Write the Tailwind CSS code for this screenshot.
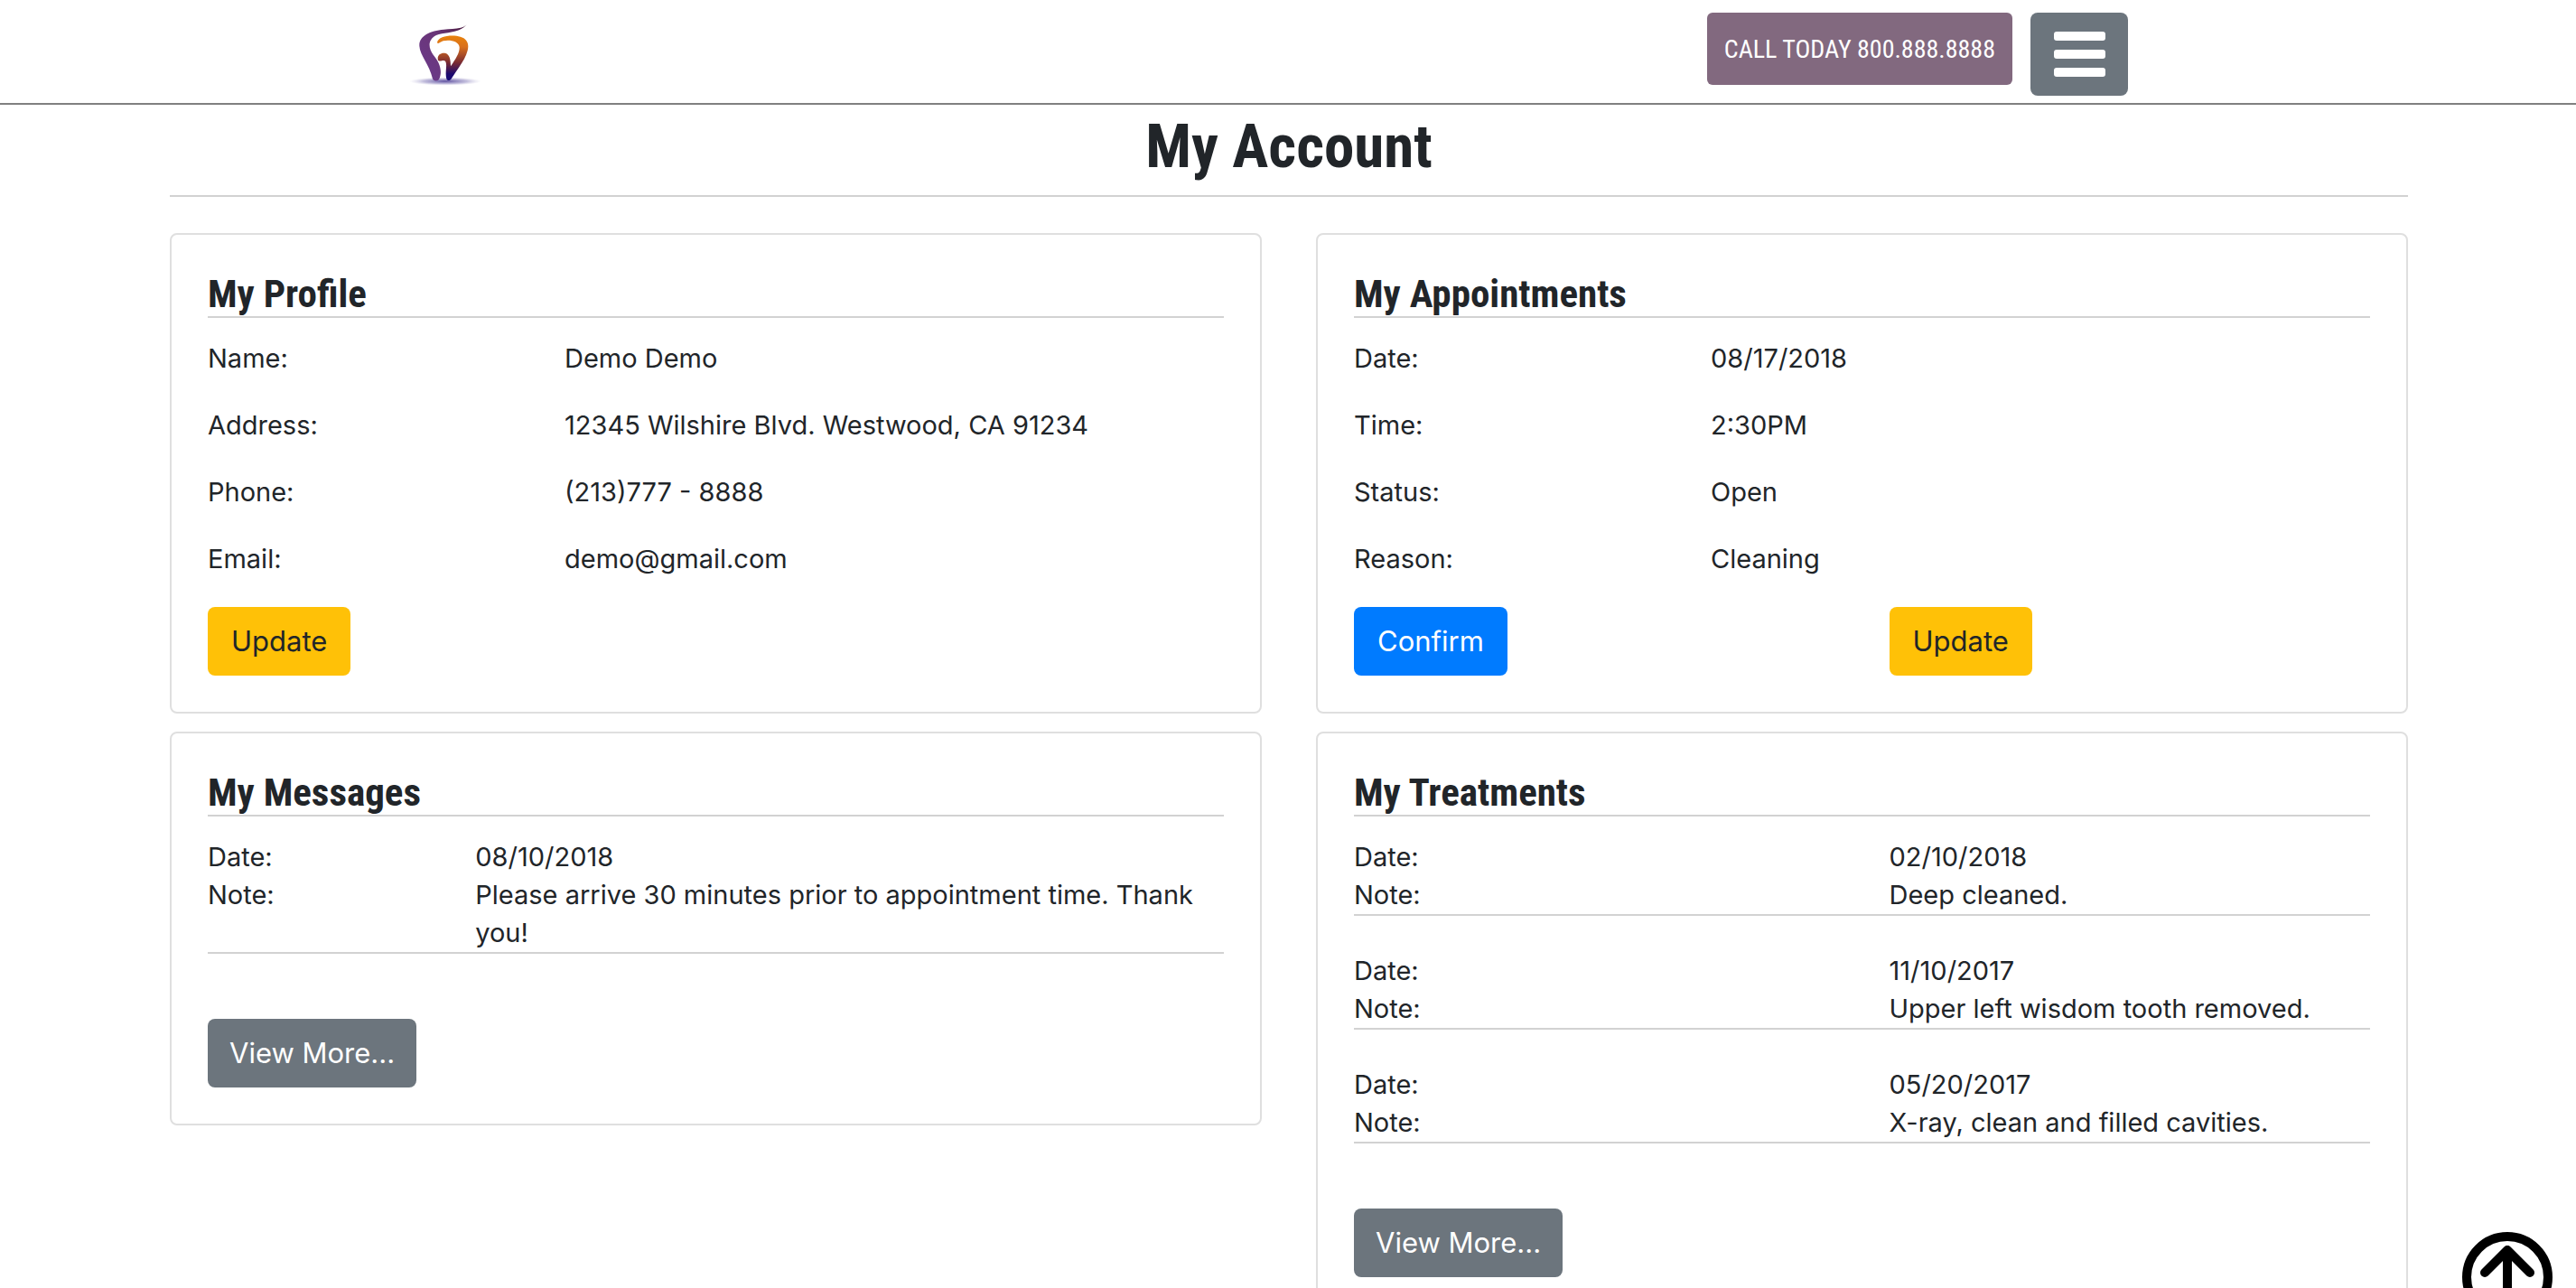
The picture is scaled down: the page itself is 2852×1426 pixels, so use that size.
<!DOCTYPE html>
<html lang="en">
<head>
<meta charset="utf-8">
<meta name="viewport" content="width=device-width, initial-scale=1">
<title>My Account</title>
<script src="https://cdn.jsdelivr.net/npm/@tailwindcss/browser@4"></script>
</head>
<body class="bg-white font-['Inter',sans-serif] text-[29px] leading-[42px] text-[#212529]">

<header class="flex items-start justify-between border-b-2 border-[#808080] pt-[14px] pr-[496px] pb-2 pl-[453px]">
  <a href="#" aria-label="Home" class="pt-[11px]">
    <svg class="block h-[70px] w-[82px]" viewBox="70 75 246 210" aria-hidden="true">
      <defs>
        <linearGradient id="left" x1="0" y1="1" x2="1" y2="0">
          <stop offset="0" stop-color="#6b3a8c"/><stop offset=".6" stop-color="#6a3577"/><stop offset="1" stop-color="#4a1c3c"/>
        </linearGradient>
        <linearGradient id="right" x1="0" y1="0" x2="0" y2="1">
          <stop offset="0" stop-color="#e8820c"/><stop offset=".25" stop-color="#d9701c"/><stop offset=".6" stop-color="#7a2b33"/><stop offset=".85" stop-color="#1e0a6e"/><stop offset="1" stop-color="#160a78"/>
        </linearGradient>
        <radialGradient id="shade">
          <stop offset="0" stop-color="#4a3a94" stop-opacity=".9"/><stop offset=".6" stop-color="#9088c0" stop-opacity=".55"/><stop offset="1" stop-color="#c8c4e0" stop-opacity="0"/>
        </radialGradient>
      </defs>
      <ellipse cx="190" cy="270" rx="120" ry="14" fill="url(#shade)"/>
      <path fill="url(#left)" d="M263 79C252 97 215 96 185 98C138 102 102 120 104 153C106 185 138 215 148 262C152 271 166 271 170 262C182 235 170 205 150 182C134 160 130 133 160 117C190 105 240 112 263 79Z"/>
      <path fill="url(#right)" d="M163 142C166 118 215 115 240 122C262 128 270 145 264 168C256 200 232 225 210 262C206 269 196 269 194 262C188 240 198 215 190 203C182 196 174 208 166 200C162 185 172 175 188 176C205 178 208 200 208 220C225 195 238 175 237 157C236 137 205 131 183 136C174 139 167 148 163 142Z"/>
    </svg>
  </a>
  <div class="flex items-start gap-5">
    <a href="tel:8008888888" class="rounded-md bg-[#82697f] px-[19px] pt-5 pb-[18px] font-['Roboto_Condensed',sans-serif] text-[28px] leading-[42px] whitespace-nowrap text-white">CALL TODAY 800.888.8888</a>
    <button type="button" aria-label="Menu" class="flex h-[92px] w-[108px] flex-col items-center gap-[10px] rounded-lg bg-[#6c757d] pt-[21px]">
      <span class="h-[10px] w-[57px] rounded-[3px] bg-white"></span>
      <span class="h-[10px] w-[57px] rounded-[3px] bg-white"></span>
      <span class="h-[10px] w-[57px] rounded-[3px] bg-white"></span>
    </button>
  </div>
</header>

<main class="pt-1 pr-[186px] pl-[188px]">
  <h1 class="mb-10 border-b-2 border-[#d2d2d2] pt-[2px] pb-[14px] text-center font-['Roboto_Condensed',sans-serif] text-[67px] leading-[80px] font-bold">My Account</h1>

  <div class="grid grid-cols-2 items-start gap-x-15 gap-y-5">

    <section class="rounded-lg border-2 border-[#dfdfdf] p-10">
      <h2 class="mb-6 border-b-2 border-[#d2d2d2] font-['Roboto_Condensed',sans-serif] text-[43px] leading-[50px] font-bold">My Profile</h2>
      <dl class="grid grid-cols-12 gap-x-15 gap-y-8">
        <dt class="col-span-4">Name:</dt><dd class="col-span-8">Demo Demo</dd>
        <dt class="col-span-4">Address:</dt><dd class="col-span-8">12345 Wilshire Blvd. Westwood, CA 91234</dd>
        <dt class="col-span-4">Phone:</dt><dd class="col-span-8">(213)777 - 8888</dd>
        <dt class="col-span-4">Email:</dt><dd class="col-span-8">demo@gmail.com</dd>
      </dl>
      <button type="button" class="mt-8 block h-[76px] rounded-lg bg-[#ffc107] px-[26px] text-[31px]">Update</button>
    </section>

    <section class="rounded-lg border-2 border-[#dfdfdf] p-10">
      <h2 class="mb-6 border-b-2 border-[#d2d2d2] font-['Roboto_Condensed',sans-serif] text-[43px] leading-[50px] font-bold">My Appointments</h2>
      <dl class="grid grid-cols-12 gap-x-15 gap-y-8">
        <dt class="col-span-4">Date:</dt><dd class="col-span-8">08/17/2018</dd>
        <dt class="col-span-4">Time:</dt><dd class="col-span-8">2:30PM</dd>
        <dt class="col-span-4">Status:</dt><dd class="col-span-8">Open</dd>
        <dt class="col-span-4">Reason:</dt><dd class="col-span-8">Cleaning</dd>
      </dl>
      <div class="mt-8 grid grid-cols-2 justify-items-start gap-x-15">
        <button type="button" class="h-[76px] rounded-lg bg-[#007bff] px-[26px] text-[31px] text-white">Confirm</button>
        <button type="button" class="h-[76px] rounded-lg bg-[#ffc107] px-[26px] text-[31px]">Update</button>
      </div>
    </section>

    <section class="rounded-lg border-2 border-[#dfdfdf] p-10">
      <h2 class="mb-6 border-b-2 border-[#d2d2d2] font-['Roboto_Condensed',sans-serif] text-[43px] leading-[50px] font-bold">My Messages</h2>
      <dl class="grid grid-cols-12 gap-x-15 border-b-2 border-[#d2d2d2]">
        <dt class="col-span-3">Date:</dt><dd class="col-span-9">08/10/2018</dd>
        <dt class="col-span-3">Note:</dt><dd class="col-span-9">Please arrive 30 minutes prior to appointment time. Thank you!</dd>
      </dl>
      <button type="button" class="mt-18 block h-[76px] rounded-lg bg-[#6c757d] px-6 text-[31px] text-white">View More...</button>
    </section>

    <section class="rounded-lg border-2 border-[#dfdfdf] p-10">
      <h2 class="mb-6 border-b-2 border-[#d2d2d2] font-['Roboto_Condensed',sans-serif] text-[43px] leading-[50px] font-bold">My Treatments</h2>
      <div class="flex flex-col gap-10">
        <dl class="grid grid-cols-2 gap-x-15 border-b-2 border-[#d2d2d2]">
          <dt>Date:</dt><dd>02/10/2018</dd>
          <dt>Note:</dt><dd>Deep cleaned.</dd>
        </dl>
        <dl class="grid grid-cols-2 gap-x-15 border-b-2 border-[#d2d2d2]">
          <dt>Date:</dt><dd>11/10/2017</dd>
          <dt>Note:</dt><dd>Upper left wisdom tooth removed.</dd>
        </dl>
        <dl class="grid grid-cols-2 gap-x-15 border-b-2 border-[#d2d2d2]">
          <dt>Date:</dt><dd>05/20/2017</dd>
          <dt>Note:</dt><dd>X-ray, clean and filled cavities.</dd>
        </dl>
      </div>
      <button type="button" class="mt-18 block h-[76px] rounded-lg bg-[#6c757d] px-6 text-[31px] text-white">View More...</button>
    </section>
  </div>
</main>

<a href="#" aria-label="Back to top" class="fixed right-[26px] -bottom-[38px]">
  <svg class="block size-[100px]" viewBox="0 0 100 100" fill="none" stroke="#000" stroke-width="10" stroke-linecap="round" stroke-linejoin="round" aria-hidden="true">
    <circle cx="50" cy="50" r="45"/>
    <path d="M25 45 50 20 75 45M50 20V80"/>
  </svg>
</a>
</body>
</html>
